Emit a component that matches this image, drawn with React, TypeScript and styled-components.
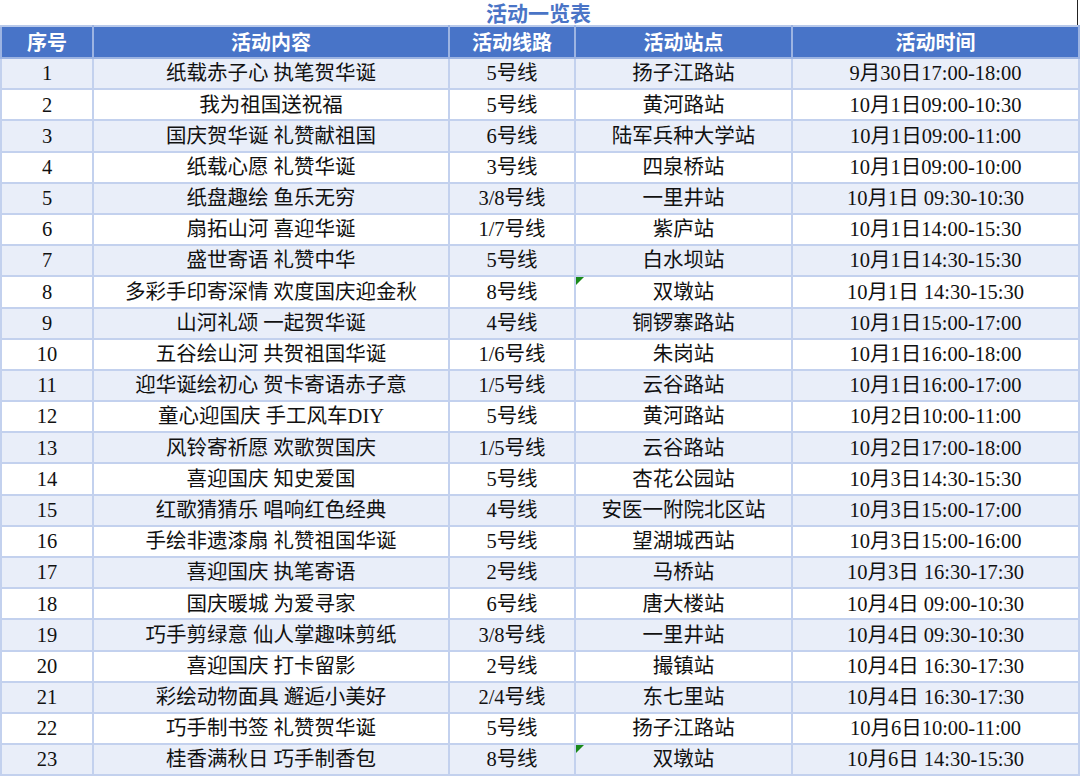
import styled, { createGlobalStyle } from 'styled-components';

const GlobalStyle = createGlobalStyle`
  html, body {
    margin: 0;
    padding: 0;
    background: #fff;
  }
`;

const Sheet = styled.div`
  width: 1078px;
  font-family: "Liberation Serif", "Noto Sans CJK SC", serif;
  color: #111;
`;

const Title = styled.div`
  height: 25px;
  display: flex;
  align-items: center;
  justify-content: center;
  border-right: 1px solid #222;
  font-family: "Noto Sans CJK SC", sans-serif;
  font-weight: 700;
  font-size: 21px;
  line-height: 25px;
  color: #4a74c6;
`;

const Table = styled.table`
  width: 1078px;
  table-layout: fixed;
  border-collapse: collapse;
  background: #fff;
`;

const HeadCell = styled.th`
  height: 30px;
  padding: 0;
  background: #4874c8;
  color: #fff;
  font-family: "Noto Sans CJK SC", sans-serif;
  font-weight: 700;
  font-size: 20px;
  line-height: 1;
  text-align: center;
  border: 2px solid #9db4e2;
  border-top-color: #b8c9ea;
`;

const Row = styled.tr<{ $shade: boolean }>`
  height: 31.2px;
  background: ${p => (p.$shade ? '#e9eef9' : '#ffffff')};
`;

const Cell = styled.td`
  position: relative;
  padding: 0;
  font-size: 20.5px;
  line-height: 1;
  text-align: center;
  white-space: nowrap;
  border: 2px solid #c3d1ee;
`;

const Flag = styled.span`
  position: absolute;
  top: 0;
  left: 0;
  width: 0;
  height: 0;
  border-top: 8px solid #1a8a1a;
  border-right: 8px solid transparent;
`;

type Item = [string, string, string, string, boolean?];

const rows: Item[] = [
  ['纸载赤子心 执笔贺华诞', '5号线', '扬子江路站', '9月30日17:00-18:00'],
  ['我为祖国送祝福', '5号线', '黄河路站', '10月1日09:00-10:30'],
  ['国庆贺华诞 礼赞献祖国', '6号线', '陆军兵种大学站', '10月1日09:00-11:00'],
  ['纸载心愿 礼赞华诞', '3号线', '四泉桥站', '10月1日09:00-10:00'],
  ['纸盘趣绘 鱼乐无穷', '3/8号线', '一里井站', '10月1日 09:30-10:30'],
  ['扇拓山河 喜迎华诞', '1/7号线', '紫庐站', '10月1日14:00-15:30'],
  ['盛世寄语 礼赞中华', '5号线', '白水坝站', '10月1日14:30-15:30'],
  ['多彩手印寄深情 欢度国庆迎金秋', '8号线', '双墩站', '10月1日 14:30-15:30', true],
  ['山河礼颂 一起贺华诞', '4号线', '铜锣寨路站', '10月1日15:00-17:00'],
  ['五谷绘山河 共贺祖国华诞', '1/6号线', '朱岗站', '10月1日16:00-18:00'],
  ['迎华诞绘初心 贺卡寄语赤子意', '1/5号线', '云谷路站', '10月1日16:00-17:00'],
  ['童心迎国庆 手工风车DIY', '5号线', '黄河路站', '10月2日10:00-11:00'],
  ['风铃寄祈愿 欢歌贺国庆', '1/5号线', '云谷路站', '10月2日17:00-18:00'],
  ['喜迎国庆 知史爱国', '5号线', '杏花公园站', '10月3日14:30-15:30'],
  ['红歌猜猜乐 唱响红色经典', '4号线', '安医一附院北区站', '10月3日15:00-17:00'],
  ['手绘非遗漆扇 礼赞祖国华诞', '5号线', '望湖城西站', '10月3日15:00-16:00'],
  ['喜迎国庆 执笔寄语', '2号线', '马桥站', '10月3日 16:30-17:30'],
  ['国庆暖城 为爱寻家', '6号线', '唐大楼站', '10月4日 09:00-10:30'],
  ['巧手剪绿意 仙人掌趣味剪纸', '3/8号线', '一里井站', '10月4日 09:30-10:30'],
  ['喜迎国庆 打卡留影', '2号线', '撮镇站', '10月4日 16:30-17:30'],
  ['彩绘动物面具 邂逅小美好', '2/4号线', '东七里站', '10月4日 16:30-17:30'],
  ['巧手制书签 礼赞贺华诞', '5号线', '扬子江路站', '10月6日10:00-11:00'],
  ['桂香满秋日 巧手制香包', '8号线', '双墩站', '10月6日 14:30-15:30', true],
];

const App = () => {
  return (
    <Sheet>
      <GlobalStyle />
      <Title>活动一览表</Title>
      <Table>
        <colgroup>
          <col style={{ width: 92 }} />
          <col style={{ width: 356 }} />
          <col style={{ width: 126 }} />
          <col style={{ width: 217 }} />
          <col style={{ width: 287 }} />
        </colgroup>
        <thead>
          <tr>
            <HeadCell>序号</HeadCell>
            <HeadCell>活动内容</HeadCell>
            <HeadCell>活动线路</HeadCell>
            <HeadCell>活动站点</HeadCell>
            <HeadCell>活动时间</HeadCell>
          </tr>
        </thead>
        <tbody>
          {rows.map(([name, line, station, time, flag], i) => (
            <Row key={i} $shade={i % 2 === 0}>
              <Cell>{i + 1}</Cell>
              <Cell>{name}</Cell>
              <Cell>{line}</Cell>
              <Cell>
                {flag && <Flag />}
                {station}
              </Cell>
              <Cell>{time}</Cell>
            </Row>
          ))}
          <Row $shade={false}>
            <Cell />
            <Cell />
            <Cell />
            <Cell />
            <Cell />
          </Row>
        </tbody>
      </Table>
    </Sheet>
  );
};

export default App;
